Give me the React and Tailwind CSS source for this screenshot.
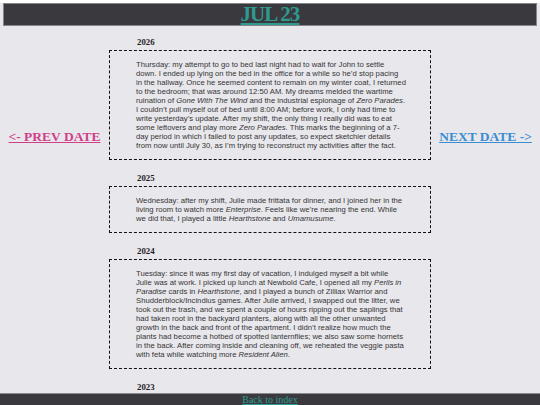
const serif = "font-['Liberation_Serif','Times_New_Roman',serif]";

// each entry is kept line by line so the paragraph wraps the same on every screen
const entries = [
  {
    year: "2026",
    lines: [
      <>Thursday: my attempt to go to bed last night had to wait for John to settle</>,
      <>down. I ended up lying on the bed in the office for a while so he’d stop pacing</>,
      <>in the hallway. Once he seemed content to remain on my winter coat, I returned</>,
      <>to the bedroom; that was around 12:50 AM. My dreams melded the wartime</>,
      <>ruination of <i>Gone With The Wind</i> and the industrial espionage of <i>Zero Parades</i>.</>,
      <>I couldn’t pull myself out of bed until 8:00 AM; before work, I only had time to</>,
      <>write yesterday’s update. After my shift, the only thing I really did was to eat</>,
      <>some leftovers and play more <i>Zero Parades</i>. This marks the beginning of a 7-</>,
      <>day period in which I failed to post any updates, so expect sketchier details</>,
      <>from now until July 30, as I’m trying to reconstruct my activities after the fact.</>,
    ],
  },
  {
    year: "2025",
    lines: [
      <>Wednesday: after my shift, Julie made frittata for dinner, and I joined her in the</>,
      <>living room to watch more <i>Enterprise</i>. Feels like we’re nearing the end. While</>,
      <>we did that, I played a little <i>Hearthstone</i> and <i>Umamusume</i>.</>,
    ],
  },
  {
    year: "2024",
    lines: [
      <>Tuesday: since it was my first day of vacation, I indulged myself a bit while</>,
      <>Julie was at work. I picked up lunch at Newbold Cafe, I opened all my <i>Perils in</i></>,
      <><i>Paradise</i> cards in <i>Hearthstone</i>, and I played a bunch of Zilliax Warrior and</>,
      <>Shudderblock/Incindius games. After Julie arrived, I swapped out the litter, we</>,
      <>took out the trash, and we spent a couple of hours ripping out the saplings that</>,
      <>had taken root in the backyard planters, along with all the other unwanted</>,
      <>growth in the back and front of the apartment. I didn’t realize how much the</>,
      <>plants had become a hotbed of spotted lanternflies; we also saw some hornets</>,
      <>in the back. After coming inside and cleaning off, we reheated the veggie pasta</>,
      <>with feta while watching more <i>Resident Alien</i>.</>,
    ],
  },
  { year: "2023", lines: [] },
];

function Entry({ year, lines }) {
  return (
    <section className="mt-[12.5px] first:mt-0">
      <h3 className={`${serif} pl-[28px] text-[8.8px] font-bold leading-[10px] text-[#1e1e1e] mb-[3px]`}>
        {year}
      </h3>
      {lines.length > 0 && (
        <div className="border border-dashed border-[#111] px-[26px] py-[9px]">
          <p className="font-['Liberation_Sans',Arial,sans-serif] text-[7.7px] leading-[9.05px] text-[#353535]">
            {lines.map((line, i) => (
              <span key={i} className="block whitespace-nowrap">
                {line}
              </span>
            ))}
          </p>
        </div>
      )}
    </section>
  );
}

export default function App() {
  return (
    <div className="min-h-screen bg-[#e8e7ec] pb-6">

      {/* ===== Title bar ===== */}
      <header className="m-[3px] mb-0 flex h-[23px] items-center justify-center border border-[#86868a] bg-[#3a393e]">
        <a
          href="#"
          className={`${serif} text-[21px] font-bold leading-none tracking-[-1px] text-[#2f9a90] underline decoration-[1.5px] underline-offset-[2px]`}
        >
          JUL 23
        </a>
      </header>

      {/* ===== Entries with date navigation ===== */}
      <main className="grid grid-cols-[1fr_322px_1fr]">
        <div className={`${serif} pt-[103px] text-center text-[13.5px] font-bold leading-[15px]`}>
          <a href="#" className="text-[#d13f8a] underline">
            &lt;- PREV DATE
          </a>
        </div>

        <div className="pt-[11px]">
          {entries.map((e) => (
            <Entry key={e.year} year={e.year} lines={e.lines} />
          ))}
        </div>

        <div className={`${serif} pt-[103px] text-center text-[13.5px] font-bold leading-[15px]`}>
          <a href="#" className="text-[#3b8dd2] underline">
            NEXT DATE -&gt;
          </a>
        </div>
      </main>

      {/* ===== Footer ===== */}
      <footer className="fixed bottom-0 left-0 right-0 h-[12px] overflow-hidden border-t border-[#8a8a8e] bg-[#3a393e] text-center">
        <a href="#" className={`${serif} block text-[10px] leading-[12px] text-[#2f9a90] underline`}>
          Back to index
        </a>
      </footer>
    </div>
  );
}
